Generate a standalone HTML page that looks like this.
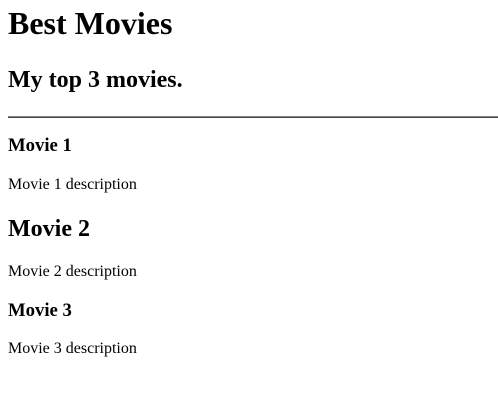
<!DOCTYPE html>
<html><head><style>
html,body{margin:0;padding:0;background:#fff;width:498px;height:416px;overflow:hidden}
body{font-family:"Liberation Serif",serif;color:#000;position:relative}
.a{position:absolute;left:8px;margin:0;line-height:normal;white-space:nowrap}
h1{font-size:32px;font-weight:bold}
h2{font-size:24px;font-weight:bold}
h3{font-size:18.72px;font-weight:bold}
p{font-size:16px}
hr{position:absolute;left:8px;top:116px;width:490px;margin:0;border:0;border-top:1px solid #888;border-bottom:1px solid #444;height:0}
</style></head><body>
<h1 class="a" style="top:5px">Best Movies</h1>
<h2 class="a" style="top:67px">My top 3 movies.</h2>
<hr>
<h3 class="a" style="top:135px">Movie 1</h3>
<p class="a" style="top:176px">Movie 1 description</p>
<h2 class="a" style="top:216px">Movie 2</h2>
<p class="a" style="top:263px">Movie 2 description</p>
<h3 class="a" style="top:300px">Movie 3</h3>
<p class="a" style="top:340px">Movie 3 description</p>
</body></html>
